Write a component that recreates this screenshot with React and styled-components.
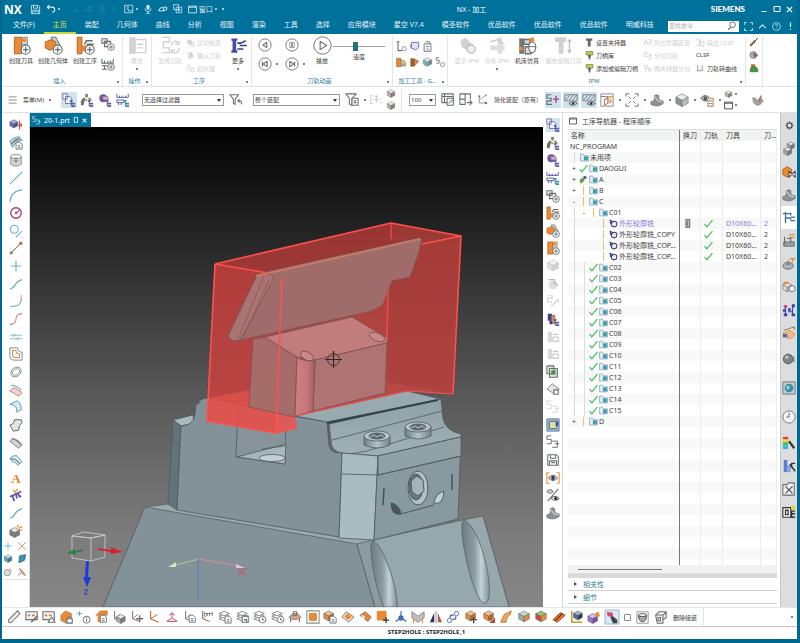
import React from 'react';
import styled, { createGlobalStyle } from 'styled-components';

const GlobalStyle = createGlobalStyle`
  * { box-sizing: border-box; }
  body { margin: 0; }
  body, button, input, select {
    font-family: 'Noto Sans', 'Noto Sans CJK SC', sans-serif;
    font-size: 7px;
    color: #3c3c3c;
  }
  button {
    padding: 0;
    border: 0;
    background: none;
  }
`;

/* ---------- icon pieces, all drawn on a 16 x 16 grid ---------- */

const INK = '#6a6e70';
const ORANGE = '#e98a35';
const RUST = '#a85a24';
const NAVY = '#5a5da8';
const TEAL = '#5cb0c5';
const GHOST = '#d2d2d2';

const L = ({ d, c = INK, w = 1.2, f = 'none' }) => (
  <path d={d} stroke={c} strokeWidth={w} fill={f} strokeLinejoin="round" />
);

const Cube = ({ x = 2, y = 1, s = 12, top = '#f3c08a', left = ORANGE, right = '#c66d1f', c = INK }) => (
  <g stroke={c} strokeWidth="0.7" strokeLinejoin="round">
    <path fill={top} d={`M${x} ${y + s * 0.27}l${s / 2} ${-s * 0.27}l${s / 2} ${s * 0.27}l${-s / 2} ${s * 0.27}z`} />
    <path fill={left} d={`M${x} ${y + s * 0.27}v${s * 0.5}l${s / 2} ${s * 0.27}v${-s * 0.5}z`} />
    <path fill={right} d={`M${x + s} ${y + s * 0.27}v${s * 0.5}l${-s / 2} ${s * 0.27}v${-s * 0.5}z`} />
  </g>
);

const GrayCube = (props) => <Cube top="#e6e8e9" left="#a4aaad" right="#777e82" {...props} />;

const Badge = ({ c = INK }) => (
  <g stroke={c} fill="#fff" strokeWidth="1">
    <circle cx="11.5" cy="11.5" r="3.8" />
    <path d="M11.5 9.2v4.6M9.2 11.5h4.6" />
  </g>
);

const Page = ({ x = 8, y = 7, c = INK, f = '#fff' }) => (
  <path d={`M${x} ${y}h4.500l2.500 2.500v5.500h-7z M${x + 2} ${y + 4}h3M${x + 2} ${y + 6}h3`} fill={f} stroke={c} />
);

const Axes = ({ a = '#c25a4a', b = '#6a9c6a' }) => (
  <g fill="none" strokeWidth="1.1">
    <path d="M3 1v9" stroke={INK} />
    <path d="M3 10l8 3" stroke={a} />
    <path d="M3 10l6-5" stroke={b} />
  </g>
);

const Layers = () => (
  <g fill="#fff" stroke={INK} strokeWidth="0.9">
    <path d="M1 10l6-2.500l6 2.500l-6 2.500z" />
    <path d="M1 7l6-2.500l6 2.500l-6 2.500z" />
    <path d="M1 4l6-2.500l6 2.500l-6 2.500z" />
  </g>
);

const Steps = ({ c = NAVY }) => (
  <g fill={c}>
    <path d="M9 8h3v2H9zM10 10h1v5h-1zM11 11h4v2h-4zM11 14h4v2h-4z" />
  </g>
);

const Sheet = ({ c = INK, f = '#a9cdd9' }) => <L c={c} f={f} w={0.9} d="M2 7L8 2l6 5-4 7z" />;

const drawings = {
  save: <><L d="M2 2h10l2 2v10H2z M5 2v4h6V2M4 14V9h8v5M6 11h4" /></>,
  undo: <L w={1.7} d="M5 2L2 5l3 3M2 5h8q4 0 4 4t-4 4" />,
  cut: <L d="M4 2l7 9M12 2L5 11M3 11h3v3H3zM10 11h3v3h-3z" />,
  copy: <L d="M2 2h8v9H2zM6 5h8v9H6z" />,
  paste: <L d="M2 3h9v11H2zM5 1h3v3H5zM7 7h7v7H7z" />,
  star: <L d="M8 2l2 4 4 .5-3 3 1 4.500-4-2-4 2 1-4.500-3-3L6 6z" />,
  screenBox: <L d="M1 2h13v12H1zM4 5h4M4 8h3v3h6" />,
  mic: <><rect x="5.500" y="1" width="5" height="8" rx="2.500" fill="currentColor" /><L c="currentColor" d="M3 7q0 5 5 5t5-5M8 12v3M5 15h6" /></>,
  pen: <L c="currentColor" w={1.6} d="M1 11l3-5h5v5H5zM9 5h5v4l-5 2" />,
  windows: <L c="currentColor" d="M1 1h8v8H1zM5 5h9v9H5zM8 8h3v3H8z" />,
  window: <L c="currentColor" d="M1 2h14v12H1zM1 4h14" w={1.5} />,
  tool: <>
    <path d="M2 1h6v14H2z" fill={ORANGE} stroke={RUST} strokeWidth="0.7" />
    <path d="M8 1h5v6H8z" fill="#d9d9d9" stroke={INK} strokeWidth="0.6" />
    <path d="M8 2h4v3H8z" fill={ORANGE} /><Badge />
  </>,
  geometry: <>
    <path d="M6 1h4l4 8-4 3z" fill="#c9cdce" stroke={INK} strokeWidth="0.8" />
    <path d="M1 5l5-2 4 2v5l-5 2-4-2z" fill={ORANGE} stroke={RUST} strokeWidth="0.7" /><Badge />
  </>,
  operation: <>
    <path d="M1 1h4v14H1z" fill={ORANGE} stroke={RUST} strokeWidth="0.7" />
    <path d="M5 8h5v5H5z" fill={ORANGE} />
    <L d="M8 4h6M7 7l2-3M9 7h6" /><Badge />
  </>,
  program: <><L d="M1 2h6v5H1zM4 5h7v6H4z" f="#eceeee" /><Badge /></>,
  method: <><L d="M1 2v5h13V2M1 10h7M4 4v3M8 4v3M11 4v3M4 10v4M1 14h6" /><Badge /></>,
  property: <>
    <path d="M1 1h5v14H1z" fill={GHOST} /><L c={GHOST} d="M6 3h9v11H6zM8 7h5M8 10h5" w={1.2} />
  </>,
  generate: <L c={GHOST} w={1.2} d="M1 1h6v4H2v5h5v4H1M9 8a3 3 0 0 1 6-1M15 4v3h-3M15 10a3 3 0 0 1-6 2M9 15v-3h3" />,
  ghostCheck: <><circle cx="6" cy="7" r="4.500" fill="#d6d6d6" /><L c="#b9b9b9" d="M8 8h6v6H8z" /></>,
  ghostVerify: <><circle cx="8" cy="9" r="5" fill="#dedede" /><L c="#bababa" d="M3 3h7v5M8 6l6 4" /></>,
  ghostPost: <L c={GHOST} w={1.5} d="M1 2h6v4H3v5h5M9 7h5v7H9z" />,
  more: <><path d="M2 2h5v2H6v8h1v2H2v-2h1V4H2z" fill="#4548a4" /><L c="#33388a" d="M7 6h3l4-2M9 8h6M7 11h5" w={1.3} /></>,
  prev: <><circle cx="8" cy="8" r="7" fill="#fff" stroke={INK} /><L d="M10 5v6L5.500 8z" /></>,
  pause: <><circle cx="8" cy="8" r="7" fill="#fff" stroke={INK} /><L d="M5.500 5h2v6h-2zM8.500 5h2v6h-2z" w={0.8} /></>,
  play: <><circle cx="8" cy="8" r="7.300" fill="#fff" stroke={INK} strokeWidth="0.8" /><L d="M6 4.500v7l5.500-3.500z" w={0.9} /></>,
  first: <><circle cx="8" cy="8" r="7" fill="#fff" stroke={INK} /><L d="M5 5v6M10.500 5v6L6 8z" /></>,
  last: <><circle cx="8" cy="8" r="7" fill="#fff" stroke={INK} /><L d="M11 5v6M5.500 5v6l4.500-3z" /></>,
  axisPoint: <><L d="M3 1v13h6M1 1h4" w={1.6} /><circle cx="12" cy="11" r="3" fill="none" stroke={INK} /></>,
  cup: <><L c={NAVY} f="#dfe3f4" d="M4 2h10v7l-4 4-7-3z" /><L d="M1 5l3 6" /></>,
  note: <><L d="M3 4h10v11H3zM5 1h6v3" f="#eef0f0" /><L d="M6 8h4M7 11l3 2" /></>,
  orangeSheet: <><path d="M1 2h6v12H1z" fill={ORANGE} stroke={RUST} /><Page x={7} y={5} f="#f7c795" /></>,
  orangeFlag: <><path d="M2 2h6v12H2z" fill={RUST} /><path d="M8 3l6 3-6 7z" fill={ORANGE} stroke={INK} /></>,
  tealTool: <><GrayCube /><path d="M4 7h6v6H4z" fill={TEAL} /></>,
  pathPoint: <><L d="M6 1H2v4h4v4H2" /><circle cx="11" cy="11" r="3" fill="none" stroke={INK} /></>,
  showIpw: <><path d="M2 4l4-3 7 7-4 5-6-4z" fill={GHOST} /><circle cx="11" cy="11" r="3.500" fill="#eee" stroke="#bbb" /></>,
  analyseIpw: <><path d="M2 8h12v4H2zM8 1h4v14H8z" fill="#dedede" /><L c="#c6c6c6" d="M2 5l6-2 5 4" /></>,
  simulate: <>
    <path d="M1 2h4v13H1z" fill="#777" /><L d="M5 3h5v4H5zM6 9h5v6H6z" f="#d9dcdd" />
    <path d="M9 2l4-1 1 3-4 1z" fill={ORANGE} /><path d="M1 9h3v3H1z" fill={ORANGE} />
    <ellipse cx="12" cy="9.500" rx="3" ry="4.500" fill="#fff" stroke={INK} /><L d="M9 9h6" w={0.8} />
  </>,
  reportTool: <><path d="M1 1h9v4H8v10H4V5H1z" fill="#d0d0d0" /><L c="#c4c4c4" d="M13 3v11M11.500 5L13 3l1.500 2M11.500 12l1.500 2 1.500-2" /></>,
  holder: <path d="M2 1h11v4h-3v10H5V5H2z" fill="#62676a" />,
  library: <><path d="M2 1h12v6H2z" fill="#c9cf3c" stroke="#555" /><path d="M5 7h6l-2 8H7z" fill="#62676a" /></>,
  ghostCompare: <L c="#cdcdcd" d="M1 13L5 2l4 11M3 9h4M10 3h5v5h-5M10 8l5 5" w={1.4} />,
  ghostSplit: <L c="#cdcdcd" d="M2 2h5v4H2v4h6M9 6h5v8H9M9 10l5-3" w={1.4} />,
  ghostHolder: <L c="#cdcdcd" d="M1 3h8v4H1M5 7v7M9 8h6l-3 6z" w={1.4} />,
  ghostOutput: <L c="#cdcdcd" d="M1 3h5v10H1M8 2v12h6V6h-4" w={1.4} />,
  curvePath: <L d="M3 2v11M1 11l2 2 2-2M7 9v4h2M11 2v10M9 10l2 2 2-2" w={1.1} />,
  brush: <><L c="#8b5b37" w={3} d="M2 14L10 6" /><L c="#444" w={1.6} d="M9 7l5-5" /></>,
  bolt: <><circle cx="7" cy="8" r="5.500" fill="#b9aaa0" stroke={INK} /><path d="M7 5l7 3-5 4z" fill="#a4583d" stroke={INK} /></>,
  greenCap: <><path d="M3 2h7v6H3z" fill="#c96f35" /><path d="M2 14q-1-8 6-8t6 8z" fill="#3d9c3f" stroke="#28692a" /></>,

  progView: <><L c={NAVY} f="#f2f4fb" w={0.9} d="M1 1h5v6H1zM4 4h5l2 2v6H4z" /><Steps /></>,
  toolView: <><path d="M6 1h3v4H6z" fill="#7d8272" /><path d="M1 9l3-4 2 1-2 8H1zM9 6l2-1 3 4-3-1z" fill="#6d7072" /><circle cx="7" cy="8" r="1.500" fill="#c9a63a" /><Steps /></>,
  geomView: <><circle cx="6" cy="6" r="4.500" fill={NAVY} /><path d="M5 4h6l1 4H6z" fill="#b9b4de" stroke="#c05a5a" strokeWidth="0.8" /><Steps /></>,
  methodView: <><L c={NAVY} w={1.1} d="M1 1v4h13V1M4 3v2M7 3v2M11 3v2M1 8h8v3H1zM3 11v3M6 11v3" /><Steps c="#3d8fa8" /></>,
  machines: <><path d="M2 2h5v8H2z" fill="#3a3f93" /><path d="M6 4h4v9H6z" fill={ORANGE} stroke={INK} /><path d="M4 10h3v4H4z" fill="#3a3f93" /><Steps /></>,
  ghostA: <GrayCube top="#f1f1f1" left="#e0e0e0" right="#d2d2d2" c="#c4c4c4" />,
  ghostB: <><path d="M2 2h5v12H2z" fill="#dadada" /><L c="#c8c8c8" d="M8 5h6M8 8h6v5H8z" /></>,
  ghostPath: <L c="#d2d2d2" w={1.4} d="M2 2h5v3H2v4h5M6 14l8-8v4" />,
  copyGreen: <><L d="M1 1h8v9H1zM4 4h9v10H4z" f="#dfe6dd" /><path d="M6 6h5v5H6z" fill="#4d9451" /></>,
  block: <><L c={INK} f="#e4e6e6" w={0.9} d="M1 8l6-6 8 6-5 6z" /><L d="M9 9h5v5H9z" f="#fff" /></>,
  pathOut: <L d="M6 1H1v4h5v5H1M7 7h6v7H7M10 10h5" w={1.1} />,
  pathOutGhost: <L c="#d6d6d6" d="M6 1H1v4h5v5H1M7 7h6v7H7M10 10h5" w={1.1} />,
  map: <><path d="M1 1h14v14H1z" fill="#8fb4cf" stroke="#5c7fa8" /><path d="M4 4h8v8H4z" fill="#d6e5a6" stroke={INK} /><path d="M11 4h3v5h-3z" fill="#4a4d9e" /></>,
  eye: <><L c={ORANGE} d="M4 2H1v12h3M12 2h3v12h-3" /><L d="M3 8q5-6 10 0q-5 6-10 0z" f="#fff" /><circle cx="8" cy="8" r="2.200" fill="#333" /></>,
  eyeSlash: <><L d="M1 4q4-4 7 0q-3 4-7 0zM14 1L2 15" f="#ddd" /><L d="M6 12q4-5 9 0q-5 4-9 0z" f="#fff" /><circle cx="11" cy="12" r="1.700" fill="#222" /></>,
  saddle: <><path d="M1 10q3 0 4-3V3q3-2 5 0v3q1 3 5 3v3q-6 5-14 1z" fill="#8c9397" stroke={INK} strokeWidth="0.8" /><path d="M5 4q2 1 4 5l5 1" fill="none" stroke="#d5d9da" strokeWidth="1.200" /></>,
  funnel: <><L d="M1 2h10L7 7v6l-2-1V7z" /><L d="M10 9h3q2 1 1 4M12 7l-2 2 2 2" /></>,
  funnelList: <><L d="M1 1h12L8 6v8l-3-1V6z" /><L f="#fff" d="M8 6h7v8H8zM10 9h3M10 11h3" /></>,
  ghostMove: <L c="#cfcfcf" d="M3 3H1v10h2M8 3l-2 2M8 3l2 2M8 3v9M4 8h8M12 12h3" w={1.3} />,
  smallCube: <GrayCube top="#efe6e0" left="#c9b3a5" right="#8c7f78" />,
  table: <><L d="M1 1h13v10H1zM1 4h13M4 1v10" /><L d="M7 6h7v8H7zM9 12l4-4" f="#fff" /></>,
  grid: <L d="M1 1h6v6H1zM7 1h6v6M1 7v6h6V7M9 11h6M12 8l3 3-3 3" />,
  nodes: <><L d="M3 3v9h9M3 8l8-6" w={0.9} /><circle cx="3" cy="3" r="1.500" fill="#8a6d6d" /><circle cx="12" cy="12" r="1.700" fill="#b05a5a" /><circle cx="12" cy="2" r="1.300" fill="#999" /></>,
  pathPlus: <><L w={1.3} d="M6 2H1v4h5v3H1v4h6" /><L c="#a3477e" w={1.7} d="M11.500 3v8M8 7h7" /></>,
  hatchEye: <><L d="M1 2h14v7H1zM2 8l5-6M6 8l5-6M10 8l5-6" w={0.9} /><L f="#fff" d="M6 12q4-4 9 0q-4 4-9 0z" /><circle cx="10.500" cy="12" r="1.500" fill="#333" /></>,
  layout: <><L d="M1 1h14v14H1zM1 4h14" w={0.9} /><path d="M9 4h6v6H9z" fill="#f6cfa8" /><L c="#b0705c" d="M5 14V8l4-3v6l-3 3M10 12l3-3" /></>,
  fit: <L d="M1 4V1h4M11 1h4v3M1 12v3h4M15 12v3h-4M4 4l3 3M12 4L9 7M4 12l3-3M12 12L9 9" w={1.1} />,
  hexCube: <GrayCube x={1} s={14} top="#ededed" left="#8d9498" right="#b9bec1" />,
  viewList: <><L d="M1 6q5-6 10 0q-5 6-10 0z" f="#eee" /><circle cx="6" cy="6" r="2.200" fill="#555" /><L c="#b98a70" f="#fff" d="M9 6h6v9H9zM10 9h4M10 12h4" /></>,
  clampTool: <><path d="M1 5l4 1 3 3 4-7 1 6 2 1-4 5-5 1-4-4z" fill="#a5a29e" stroke={INK} strokeWidth="0.8" /><path d="M9 6l3 3-3 3z" fill="#c46d52" /></>,

  boxDistance: <><Cube x={1} y={2} s={9} top="#a5a9df" left="#6367c6" right="#4649a6" /><L c="#c05050" w={1.4} d="M10 8h5M12 3v10M14 6v4" /></>,
  sheetPage: <><L c="#3e8ea6" f="#b9d4da" w={0.9} d="M1 6q4-5 11-5l3 4q-7 0-11 8z" /><L d="M3 9q4-5 9-6" /><Page /></>,
  cylinder: <><path d="M2 4v9q6 4 12 0V4z" fill="#d5d8d9" stroke={INK} strokeWidth="0.8" /><ellipse cx="8" cy="4" rx="6" ry="2.500" fill="#f2f3f3" stroke={INK} strokeWidth="0.8" /><L d="M8 5v7M5 9h6" w={0.8} /></>,
  line: <L c={TEAL} d="M1 15L15 1" />,
  arc: <L c={TEAL} d="M1 15Q2 2 15 1" />,
  circle: <><circle cx="8" cy="8" r="6" fill="none" stroke="#a83a73" strokeWidth="1.500" /><circle cx="8" cy="8" r="1.300" fill="#a83a73" /><L c="#a83a73" d="M8 8l4-3" /></>,
  circleTangent: <><circle cx="6" cy="6" r="4.500" fill="none" stroke={TEAL} strokeWidth="1.200" /><L c={TEAL} d="M8 15l7-7" /></>,
  segment: <><L d="M2 14L14 2" /><circle cx="2.500" cy="13.500" r="1.800" fill="#c06a4a" /><circle cx="13.500" cy="2.500" r="1.800" fill="#c06a4a" /></>,
  plus: <L c={TEAL} d="M8 2v12M2 8h12" w={1.3} />,
  cross: <L c="#b58a4c" d="M2 2l12 12M14 2L2 14" w={1.3} />,
  spline: <L c={TEAL} d="M1 14Q5 13 7 9T15 3" w={1.3} />,
  corner: <><L c={TEAL} d="M1 14h5Q14 13 14 6" w={1.2} /><L c="#d89a88" d="M14 7V1" /></>,
  bridge: <><L c="#d08a6b" d="M1 14Q8 14 8 8T15 2" /><L c={TEAL} d="M1 14h3M12 2h3" /></>,
  offsetArrows: <L c={TEAL} d="M1 6h14M1 10h14M5 4l2 2-2 2M11 8l-2 2 2 2" w={0.9} />,
  contour: <><L c={INK} d="M1 1h9q0 5 5 5v9H6q-5 0-5-5z" w={0.9} /><L c="#d88a4c" d="M4 4h4q0 4 4 4v4H7q-3 0-3-3z" /></>,
  ring: <><ellipse cx="8" cy="8" rx="6.500" ry="5" transform="rotate(-35 8 8)" fill="#eef5f2" stroke="#6f9488" /><ellipse cx="8" cy="8" rx="4.500" ry="3.300" transform="rotate(-35 8 8)" fill="#fff" stroke={INK} strokeWidth="0.7" /></>,
  sheetRed: <><L c="#b26a5c" f="#f1d6cd" w={0.9} d="M1 9l5-4 9 6-4 4z" /><L c={TEAL} d="M2 3q4-2 12 5" /></>,
  sheetBlue: <L c="#3e8ea6" f="#d3eaf0" w={0.9} d="M1 5l8-4q5 2 5 10l-5 3q0-6-3-8z" />,
  sheetPlain: <L c="#444" f="#dfe6e6" w={0.9} d="M1 8q5-1 5-6h8l1 3q-4 3-4 9l-6 1z" />,
  sheetPink: <><L c={INK} f="#c8d7da" w={0.9} d="M1 6l4-3 10 7-4 4z" /><L c="#bd5c88" w={1.6} d="M3 3q6 0 11 7" /></>,
  sheetPair: <><L c="#3e8ea6" f="#d6eaf0" w={0.9} d="M1 6q4-4 8-3l6 7-5 4q-2-4-6-4z" /><L d="M2 7q6-1 10 5" /></>,
  letter: <text x="8" y="14" textAnchor="middle" fontFamily="Liberation Serif, serif" fontSize="15" fontWeight="bold" fill="#e08225">A</text>,
  textWrap: <><L c="#6d4fae" w={2} d="M1 10l13-6M4 9l2 6M8 7l1 5M10 6l2 4 2-1" /><L c="#e2a72e" w={1.6} d="M5 2l2 3 3-4" /></>,
  solidSpark: <><GrayCube x={1} y={4} s={11} left="#84796c" /><L c={ORANGE} w={1.4} d="M9 4l2-3M11 5l4-2M11 7h4" /></>,
  blueCube: <Cube top="#bfe0ea" left="#5aa6bf" right="#2f7892" />,
  blueSheet: <L c="#255f75" f="#3d94b0" d="M4 3l10-2-2 9-9 4z" />,
  blobSpark: <><circle cx="7" cy="9" r="5" fill="#d6dfe1" stroke={INK} /><L c={ORANGE} d="M10 4l3-3M12 6h3" /></>,
  trimSpark: <><L c="#b5612e" f="#d8c6b5" d="M4 2l5 5 5 7-6-4z" /><L d="M2 13l6-5" /></>,

  ruler: <L d="M2 11L12 1l3 3L5 14q-2 1-3 0t0-3z" f="#eee" />,
  panelPen: <><L d="M1 2h13v9H1z" f="#f7f2ef" /><path d="M3 5h3v2H3zM8 5h3v2H8z" fill="#d8765a" /><L w={1.8} d="M7 14l7-7" /></>,
  panelTri: <><L d="M1 2h13v9H1z" f="#f7f2ef" /><path d="M3 5h3v2H3zM8 5h3v2H8z" fill="#d8765a" /><L f="#fff" d="M7 14l4-6 4 6z" /></>,
  orangeLock: <><path d="M1 6l5-5 7 3v8l-6 3-6-3z" fill={ORANGE} stroke={RUST} strokeWidth="0.6" /><L f="#fff" d="M8 10h6v5H8zM9.500 10V8h3v2" /></>,
  plusInfo: <><L c={TEAL} d="M3 1v6M0 4h6" /><circle cx="11" cy="11" r="4" fill="#fff" stroke={INK} /><L d="M11 10v3M11 8v1" /></>,
  orangePage: <><path d="M1 6l5-5h8v5z" fill={ORANGE} stroke={RUST} strokeWidth="0.6" /><path d="M3 6h4v8H3z" fill={ORANGE} /><Page x={6} y={6} /></>,
  csysCube: <><Axes /><GrayCube x={5} y={5} s={10} /></>,
  csysMove: <><Axes /><L w={1.5} d="M11 6v8M7 10h8" /></>,
  csys: <><L c="#c25a4a" d="M3 1v9l9 4" /><L c="#c98a4a" d="M3 10l8-5" /></>,
  csysRed: <L c="#c76a78" d="M8 2v7M8 9l-6 4M8 9l6 4M5 6q3-4 6 0M2 13h12" />,
  csysSave: <><Axes /><Page x={7} y={6} /></>,
  csysDim: <><Axes /><L d="M5 2v5M14 2v5M5 4h9M8 3v4M11 3v4" w={0.9} /></>,
  layersPage: <><Layers /><Page /></>,
  layersSave: <><Layers /><L d="M7 7h7v7H7zM9 11h3v3" f="#fff" /></>,
  layersMove: <><Layers /><circle cx="11" cy="11" r="3.800" fill="#fff" stroke={INK} /><L d="M11 9v2l2 1" /></>,
  layersBox: <><Layers /><GrayCube x={8} y={7} s={7} /></>,
  table3d: <><path d="M1 8l5-4h5l4 4-5 3H5z" fill="#d2a384" stroke={INK} strokeWidth="0.7" /><L d="M3 9v5M13 9v5M6 2h4v4H6z" /></>,
  target: <><L d="M1 1h14v14H1z" c="#85927c" /><path d="M4 4h8v8H4z" fill={ORANGE} stroke={RUST} strokeWidth="0.6" /></>,
  cubePage: <><Cube s={11} x={1} /><Page /></>,
  faceOrange: <><L c={INK} f="#f2d7bd" d="M1 8l5-6 9 6-6 6z" w={0.9} /><path d="M4 7l4-3 4 4-4 3z" fill={ORANGE} /></>,
  faceCut: <><L c={INK} f={ORANGE} d="M1 6l6-4 7 6-4 5z" w={0.9} /><path d="M2 5l5 3-2 3z" fill="#fff" /></>,
  orangeMove: <><path d="M1 1h11v11H1z" fill={ORANGE} /><L c="#333" w={1.4} d="M11.500 8v7M8 11.500h7" /></>,
  blueAxis: <><circle cx="8" cy="9" r="3" fill="#3b62a8" /><L c="#4a75bb" w={1.4} d="M8 9V1M8 9l-6 4M8 9l6 4" /></>,
  vee: <><path d="M1 2l7 5 7-5v7l-7 5-7-5z" fill="#c4c0b8" stroke={INK} strokeWidth="0.8" /><L c={ORANGE} d="M3 10v5M13 10v5" /></>,
  mirror: <><path d="M1 14L6 3v11z" fill="#2d2d6f" /><path d="M15 14L10 3v11z" fill="#b9574c" /><L d="M8 1v14" w={0.8} /></>,
  link: <><circle cx="4" cy="12" r="2.500" fill="none" stroke="#4d66a8" /><circle cx="12" cy="4" r="2.500" fill="none" stroke="#4d66a8" /><L c="#6a6fb0" w={1.6} d="M5 9V6h4M7 11l4-1V7" /></>,
  cubeMove: <><Cube s={11} /><L w={1.5} c="#444" d="M11 8v7M8 11h7" /></>,
  cubeArrow: <><Cube s={11} /><L w={1.8} c="#b5462e" d="M8 9l6 5M14 9v5H9" /></>,
  bent: <path d="M2 14l4-9 8-4-1 4q-4 2-5 9z" fill="#f0a55c" stroke={RUST} strokeWidth="0.8" />,
  cubeGreen: <Cube top="#c5dbe0" left="#8fb7a0" right={ORANGE} />,
  cubeTeal: <Cube top="#f2b477" left="#6fb0c1" right="#b9d7de" />,
  cubeRed: <Cube top="#9bc46b" left="#c94c3d" right={ORANGE} />,
  bars: <><path d="M1 11l9-8 5 3-9 8z" fill={ORANGE} stroke="#8a2f14" /><L c="#8a2f14" w={1.8} d="M4 12l8-8" /></>,
  measureBox: <><L c="#c49a2a" w={1.8} d="M2 1v13h12" /><Cube x={4} y={1} s={10} top="#9cb4e0" left="#4a66b0" right="#333" /></>,
  purpleBox: <><Cube x={1} y={4} s={11} top="#d9b9ef" left="#a86fd0" right="#7c49a6" /><path d="M9 4l4-2 2 5-4 1z" fill={ORANGE} /></>,
  axisPink: <><path d="M0 0h16v16H0z" fill="#dceaf5" stroke="#8ab0d0" /><path d="M2 2l7 1v5l-6-1z" fill="#d04c78" /><path d="M6 8l3-1 5 4v4H9z" fill="#444" /></>,
  bowl: <><L d="M1 1h14v14H1z" c="#999" /><path d="M3 5h10q0 8-5 8T3 5z" fill="#a5abad" stroke="#333" /><ellipse cx="8" cy="5" rx="5" ry="1.800" fill="#fff" stroke="#333" /></>,
  frame: <L w={1.3} d="M2 5h9v10H4zM11 5l4-4v7l-4 3M5 8h3v4H5zM2 5l4-4h9" f="#eee" />,

  gear: <><circle cx="8" cy="8" r="4.500" fill="none" stroke="#444" strokeWidth="2" /><L c="#444" w={2} d="M8 1v2M8 13v2M1 8h2M13 8h2M3 3l1.500 1.500M11.500 11.500L13 13M3 13l1.500-1.500M11.500 4.500L13 3" /></>,
  assembly: <><GrayCube x={6} y={0} s={8} /><GrayCube x={2} y={6} s={9} /></>,
  constraint: <><path d="M1 5l5-3 5 3v6l-5 3-5-3z" fill={ORANGE} stroke={RUST} /><L c="#444" f="#fff" d="M8 7l7 7V7l-7 7z" /></>,
  navigator: <><L c="#3f6fa0" w={1.5} d="M1 3h9M4 1v13M4 8h6M10 2v3" /><L c="#3f6fa0" d="M10 7h5M10 11h5M10 7v4" /></>,
  mill: <><path d="M2 9h12v5H2z" fill="#9aa0a2" stroke={INK} /><L c={ORANGE} w={1.7} d="M8 1h7M9 4h5" /><L w={1.3} d="M3 3v9M6 5h4v5" /></>,
  disc: <><ellipse cx="7" cy="10" rx="6" ry="4" fill="#aeb4b6" stroke={INK} /><path d="M4 9l3-6 3 6z" fill="#858b8d" /><L c={ORANGE} w={1.5} d="M9 2h6M12 2v4" /></>,
  boxesOrange: <><Cube x={1} y={3} s={10} top="#eee" left="#ddd" right="#bbb" /><path d="M2 2h6l-2 3H1z" fill={ORANGE} /><circle cx="11.500" cy="10" r="3.500" fill="#eee" stroke={INK} /></>,
  people: <><circle cx="4" cy="4" r="2" fill="#d0457a" /><circle cx="13" cy="3" r="2" fill="#4145a0" /><path d="M1 7h3v3H1zM2 12h4v3H2zM11 12h4v3h-4zM7 6h3v3H7z" fill="#4145a0" /><L c="#4145a0" d="M4 5v8M12 4v9M7 10h5" w={1.3} /></>,
  handBook: <><path d="M1 8l8-3 6 4-4 5-5 0z" fill="#f1b98a" stroke={ORANGE} strokeWidth="0.800" /><path d="M1 9h5v4H1z" fill="#4b6cb0" /><L c="#9c6a3a" d="M2 5l12-4v3" /></>,
  sphere: <><circle cx="7" cy="8" r="5.500" fill="#7d8285" stroke="#555" /><circle cx="5.500" cy="6" r="2" fill="#bcc1c3" /><L d="M13.500 5v7" /></>,
  globe: <><path d="M1 1h14v14H1z" fill="#c3cfd4" stroke={INK} /><circle cx="8" cy="8" r="5" fill="#3a8dab" /><path d="M5 5l4 1-1 4-3-1z" fill="#9fd0c0" /></>,
  clock: <><circle cx="8" cy="8" r="7" fill="#f4f4f4" stroke="#666" strokeWidth="0.900" /><L d="M8 3v5H5" /></>,
  heat: <><path d="M1 1h6v3H1z" fill="#e8442c" /><path d="M1 4h6v3H1z" fill="#f2d92e" /><path d="M1 7h6v4H1z" fill="#43c06a" /><path d="M1 11h6v4H1z" fill="#3cb4e8" /><L w={2.5} c="#333" d="M8 6l6 8" /></>,
  cutter: <><path d="M2 1h4v14H2z" fill="#5c7ed2" /><path d="M6 7h4v8H6z" fill="#88a4e0" /><L c="#333" w={1.6} d="M9 6l6 8M15 5h-4v5" /></>,
  tools: <><L f="#f0f0f0" d="M1 3h5l1-2h7v14H1z" /><L c="#555" w={1.6} d="M4 5l8 8M12 5l-8 8" /></>,
  film: <><path d="M1 3h9v11H1z" fill="#fff" stroke="#333" strokeWidth="1.300" /><L c="#333" w={1.5} d="M4 6h3v5H4zM15 7h-4v3h4M15 14h-4v-4" /><circle cx="13" cy="3" r="2.500" fill="#dcd83c" /></>,
};

const Svg = styled.svg`
  display: block;
  flex: none;
  overflow: visible;
  width: ${(p) => p.$size}px;
  height: ${(p) => p.$size}px;
`;

const Icon = ({ name, size = 14 }) => (
  <Svg viewBox="0 0 16 16" $size={size} aria-hidden="true">{drawings[name]}</Svg>
);

const Dot = styled.i`
  width: 2px;
  height: 2px;
  flex: none;
  background: #555;
  border-radius: 1px;
`;

/* ---------- window frame ---------- */

const Window = styled.div`
  display: flex;
  flex-direction: column;
  min-height: 100vh;
  padding: 0 3px 4px 2px;
  background: #00688f;
`;

const TitleBar = styled.header`
  display: grid;
  grid-template-columns: 1fr auto 1fr;
  align-items: center;
  height: 18px;
  padding: 0 4px 0 2px;
  color: #fff;
  background: #00719b;
`;

const QuickAccess = styled.div`
  display: flex;
  align-items: center;
  gap: 5px;
  path { stroke: currentColor; }
`;

const QuickButton = styled.button`
  display: flex;
  align-items: center;
  gap: 2px;
  color: #dcecf2;
  opacity: ${(p) => (p.$faint ? 0.15 : 1)};
  ${Dot} { background: currentColor; }
`;

const Brand = styled.strong`
  font: bold 12px 'Open Sans', sans-serif;
  padding-right: 3px;
`;

const Caption = styled.h1`
  margin: 0;
  padding-left: 146px;
  font-size: 7px;
  font-weight: 400;
`;

const WindowControls = styled.div`
  display: flex;
  justify-content: flex-end;
  align-items: center;
  gap: 5px;
  button { color: #fff; }
`;

const Maker = styled.strong`
  font: 900 8px Lato, sans-serif;
  padding-right: 10px;
`;

const MenuBar = styled.nav`
  display: flex;
  align-items: center;
  height: 16px;
  padding-left: 2px;
  color: #fff;
  background: #00719b;
`;

const MenuLink = styled.a`
  padding: 0 9px;
  line-height: 14px;
  white-space: nowrap;
  text-decoration: none;
  color: ${(p) => (p.$active ? '#d4e04e' : '#e6f2f6')};
  border-bottom: 2px solid ${(p) => (p.$active ? '#c8d63c' : 'transparent')};
`;

const Search = styled.label`
  display: flex;
  align-items: center;
  flex: none;
  width: 71px;
  height: 11px;
  margin: 0 5px 0 auto;
  background: #fff;
  input {
    width: 59px;
    height: 10px;
    padding: 0 1px;
    border: 0;
    font-size: 6px;
  }
  input::placeholder { color: #aaa; }
`;

const MenuTools = styled.div`
  display: flex;
  align-items: center;
  gap: 5px;
  padding-right: 2px;
  color: #dcecf2;
  button { color: inherit; }
`;

/* ---------- ribbon ---------- */

const Ribbon = styled.section`
  display: flex;
  height: 52px;
  padding-top: 2px;
  background: #fff;
`;

const Group = styled.div`
  display: flex;
  flex-direction: column;
  flex: none;
  width: ${(p) => p.$width}px;
  border-right: 1px solid #e4e7e8;
`;

const GroupBody = styled.div`
  display: flex;
  flex: 1;
  padding: 0 ${(p) => p.$pad || 0}px;
`;

const GroupLabel = styled.div`
  display: flex;
  align-items: center;
  justify-content: space-between;
  height: 9px;
  padding-right: 3px;
  font-size: 6px;
  line-height: 9px;
  white-space: nowrap;
  color: #2e7f99;
  span { flex: 1; text-align: center; }
`;

const BigButton = styled.button`
  display: flex;
  flex-direction: column;
  align-items: center;
  flex: none;
  width: ${(p) => p.$width || 32}px;
  gap: 2px;
  font-size: 6px;
  line-height: 9px;
  white-space: nowrap;
  color: ${(p) => (p.$ghost ? '#d0d0d0' : '#3c3c3c')};
`;

const Stack = styled.div`
  display: flex;
  flex-direction: column;
  flex: none;
  gap: ${(p) => p.$gap || 3}px;
  padding-top: 1px;
  width: ${(p) => (p.$width ? `${p.$width}px` : 'auto')};
`;

const ListButton = styled.button`
  display: flex;
  align-items: center;
  gap: 2px;
  height: 10px;
  font-size: 6px;
  white-space: nowrap;
  color: ${(p) => (p.$ghost ? '#cfcfcf' : '#3c3c3c')};
`;

const PlayGrid = styled.div`
  display: grid;
  grid-template-columns: 27px 26px;
  row-gap: 4px;
  padding: 2px 0 6px 6px;
  button { display: flex; align-items: center; gap: 4px; }
`;

const Speed = styled.label`
  display: flex;
  flex-direction: column;
  align-items: center;
  gap: 3px;
  padding-top: 6px;
  font-size: 6px;
  line-height: 9px;
  input {
    appearance: none;
    width: 52px;
    height: 8px;
    margin: 0;
    background: linear-gradient(#a3a3a3, #a3a3a3) center / 100% 1px no-repeat;
  }
  input::-webkit-slider-thumb {
    appearance: none;
    width: 5px;
    height: 9px;
    background: #23707f;
  }
`;

const ToolGrid = styled.div`
  display: grid;
  grid-template-columns: repeat(${(p) => p.$columns}, 12px);
  align-content: start;
  column-gap: 1px;
  padding: 5px 0 0 3px;
  row-gap: 5px;
`;

/* ---------- selection bar ---------- */

const SelectionBar = styled.section`
  display: flex;
  align-items: center;
  gap: 2px;
  height: 27px;
  padding: 0 3px 0 5px;
  background: #fff;
  border-top: 1px solid #dfe3e4;
  border-bottom: 1px solid #dfe3e4;
`;

const BarButton = styled.button`
  display: flex;
  align-items: center;
  justify-content: center;
  gap: 5px;
  flex: none;
  padding: 1px;
  font-size: ${(p) => (p.$text ? 6 : 7)}px;
  white-space: nowrap;
  background: ${(p) => (p.$active ? '#cfe3ef' : 'none')};
`;

const Picker = styled.span`
  position: relative;
  flex: none;
  width: ${(p) => p.$width}px;
  margin: 0 2px;
  select {
    display: block;
    appearance: none;
    width: 100%;
    height: 12px;
    padding: 0 1px;
    border: 1px solid #999;
    border-radius: 0;
    background: #fff;
    font-size: 6px;
  }
  &::after {
    content: '';
    position: absolute;
    right: 3px;
    top: 5px;
    border: 2px solid transparent;
    border-top: 3px solid #333;
    border-bottom: 0;
  }
`;

const Divider = styled.i`
  width: 1px;
  height: 22px;
  flex: none;
  background: #dfe3e4;
`;

const Gap = styled.i`
  flex: ${(p) => (p.$width ? `0 0 ${p.$width}px` : 1)};
`;

const ToolStack = styled.div`
  display: flex;
  flex-direction: column;
  gap: ${(p) => p.$gap || 2}px;
  color: #777;
`;

/* ---------- work area ---------- */

const WorkArea = styled.main`
  display: flex;
  flex: 1;
  background: #fff;
`;

const SideTools = styled.aside`
  display: flex;
  flex-direction: column;
  align-items: center;
  flex: none;
  width: ${(p) => p.$width}px;
  padding-top: 5px;
  background: #fff;
  border-right: 1px solid #d5dadc;
`;

const ToolColumn = styled.div`
  display: flex;
  flex-direction: column;
  justify-content: space-between;
  align-items: center;
  height: ${(p) => p.$height}px;
`;

const PairGrid = styled.div`
  display: grid;
  grid-template-columns: 11px 11px;
  gap: 3px;
  padding: 3px 0 2px;
  border-bottom: 1px solid #e2e2e2;
`;

const IconButton = styled.button`
  display: flex;
  overflow: visible;
  background: ${(p) => (p.$active ? '#cfe3ef' : 'none')};
`;

const Stage = styled.div`
  display: flex;
  flex-direction: column;
  flex: 1;
  min-width: 0;
`;

const TabStrip = styled.div`
  display: flex;
  height: 14px;
  background: #fff;
`;

const FileTab = styled.button`
  display: flex;
  align-items: center;
  gap: 3px;
  padding: 0 4px 0 2px;
  color: #fff;
  background: #00719b;
  path { stroke: #dcecf2; }
`;

const Viewport = styled.div`
  position: relative;
  flex: 1;
  min-height: 300px;
  background: linear-gradient(#000 0%, #141414 12%, #3a3a3a 36%, #585858 56%, #7c7c7c 85%, #868686 100%);
  svg {
    position: absolute;
    inset: 0;
    width: 100%;
    height: 100%;
  }
`;

/* ---------- operation navigator ---------- */

const Navigator = styled.section`
  display: flex;
  flex-direction: column;
  flex: none;
  width: 217px;
  padding: 0 3px 0 5px;
  background: #fff;
`;

const NavTitle = styled.h2`
  display: flex;
  align-items: center;
  gap: 5px;
  height: 16px;
  margin: 0;
  padding-left: 1px;
  font-size: 7px;
  font-weight: 400;
`;

const TreeFrame = styled.div`
  height: 436px;
  overflow: hidden;
  border-top: 1px solid #e0e0e0;
`;

const Tree = styled.table`
  width: 100%;
  table-layout: fixed;
  border-collapse: collapse;
  th, td {
    height: 11px;
    padding: 0 0 0 3px;
    overflow: hidden;
    font-weight: 400;
    text-align: left;
    line-height: 10px;
    white-space: nowrap;
    border-right: 1px solid #ececec;
  }
  th { background: #f1f2f2; }
  th:first-child, td:first-child { border-right: 1px solid #777; padding-left: 1px; }
  tbody tr:nth-child(even) { background: #f8f8f8; }
`;

const Row = styled.tr`
  color: ${(p) => (p.$current ? '#8478d8' : '#3c3c3c')};
`;

const NameCell = styled.div`
  display: flex;
  align-items: center;
  height: 11px;
`;

const Slot = styled.span`
  display: flex;
  align-items: center;
  justify-content: center;
  flex: none;
  width: ${(p) => p.$width}px;
  height: 11px;
  line-height: 10px;
  background: ${(p) => (p.$guide ? 'linear-gradient(#dcdcdc, #dcdcdc) center / 1px 100% no-repeat' : 'none')};
`;

const ScrollTrack = styled.div`
  height: 9px;
  padding: 4px 115px 0 10px;
  background: #f1f1f1;
  border-bottom: 1px solid #ddd;
`;

const ScrollThumb = styled.div`
  height: 1px;
  background: #777;
`;

const Splitter = styled.div`
  height: 4px;
  background: #dadada;
`;

const Section = styled.button`
  display: flex;
  align-items: center;
  gap: 6px;
  height: 13px;
  padding-left: 6px;
  color: #2e7f99;
  border-bottom: 1px solid #d0d0d0;
  &::before {
    content: '';
    border: 2px solid transparent;
    border-left: 3px solid #2b5968;
    border-right: 0;
  }
`;

const ResourceBar = styled.aside`
  display: flex;
  flex-direction: column;
  flex: none;
  width: 17px;
  padding-top: 1px;
  background: #dcddde;
  border-left: 1px solid #c4c8ca;
`;

const ResourceTab = styled.button`
  display: flex;
  align-items: center;
  justify-content: center;
  height: ${(p) => (p.$tall ? 29 : 23)}px;
  background: ${(p) => (p.$active ? '#fff' : 'none')};
`;

/* ---------- bottom ---------- */

const BottomBar = styled.footer`
  display: flex;
  align-items: center;
  gap: 5px;
  height: 20px;
  padding: 0 4px 0 5px;
  background: #fff;
  border-bottom: 1px solid #d5c5c5;
  border-top: 1px solid #e6e6e6;
  input {
    appearance: none;
    width: 7px;
    height: 7px;
    margin: 0;
    border: 1px solid #888;
    border-radius: 1px;
  }
  label { display: flex; }
`;

const BottomIcons = styled.div`
  display: flex;
  justify-content: space-between;
  flex: 0 1 612px;
`;

const Status = styled.div`
  height: 12px;
  padding-left: 54px;
  font-size: 6px;
  font-weight: 700;
  line-height: 11px;
  text-align: center;
  color: #222;
  background: #fff;
`;

/* ---------- data ---------- */

const menus = ['文件(F)', '主页', '装配', '几何体', '曲线', '分析', '视图', '渲染', '工具', '选择', '应用模块', '星空 V7.4', '模圣软件', '优品软件', '优品软件', '优品软件', '明威科技'];

const leftTools = ['boxDistance', 'sheetPage', 'cylinder', 'line', 'arc', 'circle', 'circleTangent', 'segment', 'plus', 'spline', 'corner', 'bridge', 'offsetArrows', 'contour', 'ring', 'sheetRed', 'sheetBlue', 'sheetPlain', 'sheetPink', 'sheetPair', 'letter', 'textWrap', 'spline', 'solidSpark'];
const pairTools = ['plus', 'cross', 'blueCube', 'blueSheet', 'blobSpark', 'trimSpark'];

const viewTools = ['progView', 'toolView', 'geomView', 'methodView', 'program', 'operation', 'geometry', 'tool', 'ghostA', 'ghostVerify', 'ghostPath', 'machines', 'ghostB', 'ghostB', 'copyGreen', 'block', 'pathOutGhost', 'map', 'pathOut', 'save', 'eye', 'eyeSlash', 'saddle'];

const resourceTabs = ['gear', 'assembly', 'constraint', 'saddle', 'navigator', 'mill', 'disc', 'boxesOrange', 'people', 'handBook', 'sphere', 'globe', 'clock', 'heat', 'cutter', 'tools', 'film'];
const tallTabs = ['sphere', 'globe', 'clock'];

const bottomTools = ['ruler', 'panelPen', 'panelTri', 'orangeLock', 'plusInfo', 'orangePage', 'csysCube', 'csysMove', 'csys', 'csysRed', 'csysSave', 'csysDim', 'layersPage', 'layersSave', 'layersMove', 'layersMove', 'table3d', 'target', 'cubePage', 'faceOrange', 'faceCut', 'orangeMove', 'blueAxis', 'vee', 'mirror', 'link', 'cubeMove', 'cubeArrow', 'bent', 'cubeGreen', 'cubeRed', 'bars', 'measureBox', 'purpleBox', 'axisPink'];

const operation = (name, current) => ({ name, depth: 3, status: 'bar', icon: 'op', tool: 'D10X60...', current });

const rows = [
  { name: 'NC_PROGRAM', depth: 0 },
  { name: '未用项', depth: 1, icon: 'folder' },
  { name: 'DAOGUI', depth: 1, toggle: '+', status: 'check', icon: 'folder' },
  { name: 'A', depth: 1, toggle: '+', status: 'mixed', icon: 'folder' },
  { name: 'B', depth: 1, toggle: '+', status: 'bar', icon: 'folder' },
  { name: 'C', depth: 1, toggle: '-', status: 'bar', icon: 'folder' },
  { name: 'C01', depth: 2, toggle: '-', status: 'bar', icon: 'folder' },
  operation('外形轮廓铣', true),
  operation('外形轮廓铣_COPY'),
  operation('外形轮廓铣_COP...'),
  operation('外形轮廓铣_COP...'),
  ...Array.from({ length: 14 }, (_, i) => ({
    name: `C${String(i + 2).padStart(2, '0')}`,
    depth: 2,
    status: 'check',
    icon: 'folder',
  })),
  { name: 'D', depth: 1, toggle: '+', status: 'bar', icon: 'folder' },
];

const treeMarks = {
  check: <L c="#48c45c" w={2.4} d="M1 9l4 5L15 2" />,
  bar: <L c="#e9c46a" w={2} d="M8 0v16" />,
  mixed: <><path d="M1 9l6-5 3 6-6 5z" fill="#4cae50" /><path d="M8 2h5v5H8z" fill="#5a4a9c" /><L c="#c46a3a" w={2} d="M2 14l5-6" /></>,
  folder: <><path d="M1 2h5l2 3h7v9H1z" fill="#dfeef2" stroke="#6d8a94" /><path d="M7 6h7v7H7z" fill="#3f9db0" /></>,
  op: <><circle cx="9" cy="9" r="5" fill="#e7e9f5" stroke="#3d4376" strokeWidth="1.800" /><L c="#3d4376" w={2} d="M2 2l5 3-4 3z" /></>,
  holder: <><path d="M5 1h7v14H5z" fill="#bbb" stroke="#555" strokeWidth="1.500" /><L c="#555" d="M8 4v8" /></>,
};

const Mark = ({ name, size = 9 }) => (
  <Svg viewBox="0 0 16 16" $size={size} aria-hidden="true">{treeMarks[name]}</Svg>
);

/* ---------- parts ---------- */

const Big = ({ icon, label, ghost, width, menu }) => (
  <BigButton $ghost={ghost} $width={width}>
    <Icon name={icon} size={19} />
    {label}
    {menu && <Dot />}
  </BigButton>
);

const Item = ({ icon, label, ghost }) => (
  <ListButton $ghost={ghost}>
    {icon && <Icon name={icon} size={9} />}
    {label}
  </ListButton>
);

const Tools = ({ names, size, active = [] }) => names.map((name, i) => (
  <IconButton key={i} aria-label={name} $active={active.includes(i)}>
    <Icon name={name} size={size} />
  </IconButton>
));

const TreeRow = ({ row }) => (
  <Row $current={row.current}>
    <td>
      <NameCell>
        {row.depth === 0 && <Slot $width={1} />}
        {row.depth > 1 && <Slot $width={10} $guide />}
        {row.depth > 2 && <Slot $width={10} />}
        {row.depth > 0 && <Slot $width={10} $guide={!row.toggle && row.depth < 3}>{row.toggle}</Slot>}
        {row.status && <Slot $width={9}><Mark name={row.status} /></Slot>}
        {row.icon && <Slot $width={11}><Mark name={row.icon} /></Slot>}
        {row.name}
      </NameCell>
    </td>
    <td>{row.current && <Mark name="holder" />}</td>
    <td>{row.tool && <Mark name="check" />}</td>
    <td>{row.tool}</td>
    <td>{row.tool && '2'}</td>
  </Row>
);

const Bolt = ({ x, y }) => (
  <g stroke="#4e5a60" strokeWidth="0.8">
    <path d={`M${x - 13} ${y - 4}v9q13 6 26 0v-9z`} fill="url(#pin)" />
    <ellipse cx={x} cy={y - 4} rx="13" ry="5" fill="#b7c5c9" />
    <ellipse cx={x} cy={y - 4} rx="8" ry="3" fill="#5d686d" />
    <path d={`M${x - 7} ${y - 3}l4-2 3 2 4-2 3 2`} fill="none" stroke="#d5dfe2" />
  </g>
);

const Model = () => (
  <svg viewBox="30 127 513 480" preserveAspectRatio="xMidYMid slice" aria-hidden="true">
    <defs>
      <linearGradient id="pin"><stop offset="0" stopColor="#707e84" /><stop offset="0.500" stopColor="#b4c3c7" /><stop offset="1" stopColor="#74838a" /></linearGradient>
      <linearGradient id="slot"><stop offset="0" stopColor="#6d7c82" /><stop offset="0.450" stopColor="#8a9ba1" /><stop offset="0.700" stopColor="#c3d2d6" /><stop offset="1" stopColor="#7f9096" /></linearGradient>
      <linearGradient id="post"><stop offset="0" stopColor="#cf7f82" /><stop offset="0.600" stopColor="#c4777a" /><stop offset="1" stopColor="#9c5f60" /></linearGradient>
      <linearGradient id="rail" x2="0" y2="1"><stop offset="0" stopColor="#8fa1a7" /><stop offset="1" stopColor="#a0b1b6" /></linearGradient>
    </defs>

    {/* base */}
    <g stroke="#566268" strokeWidth="0.8" strokeLinejoin="round">
      <path d="M145 507l23-3 210 30 80-10 25-8 26 91H103z" fill="#9aabb0" />
      <path d="M145 507l212 37 18 63H103z" fill="#829298" />
      <path d="M357 544l16-4 18 67h-16z" fill="#8b9ba1" />
      <path d="M373 540l85-19 25-5 26 91H391z" fill="#97a8ad" />
      <path d="M371 545c1-8 8-2 15 15s12 37 11 47h-13c-8-17-14-50-13-62z" fill="url(#slot)" />
      <path d="M462 524c1-9 11 1 18 20s12 46 8 56-12-5-17-22-10-42-9-54z" fill="url(#slot)" />
    </g>

    {/* jaw */}
    <g stroke="#4e5a60" strokeWidth="0.8" strokeLinejoin="round">
      <path d="M173 420l20-5 1 8-13 3z" fill="#a9bbc0" />
      <path d="M173 420l8 6-4 84-9-6 4-64z" fill="#64737a" />
      <path d="M172 440l8 5" fill="none" />
      <path d="M181 426q12 0 14-12l1-10h3v-3l6-3 82 17 40 7 2 23q1 9 13 8l-3 84-162-27z" fill="#829298" />
      <path d="M295 416l112-25 34 8-114 23z" fill="#97aaaf" />
      <path d="M329 424l112-25 2 20q3 12 18 15v3l-83 19-36-3q-11-2-11-12z" fill="url(#rail)" />
      <path d="M332 440l110-29M341 454q12 0 26-3l77-24" fill="none" />
      <path d="M327 423l111-23" stroke="#354248" strokeWidth="1.800" />
      <path d="M342 453l36 3-4 84-35-2z" fill="#a8bcc2" />
      <path d="M378 456l83-19-3 82-84 21z" fill="#8999a0" />
      <path d="M378 456l83-19v19l-83 19z" fill="#91a2a7" />
      <path d="M342 474l36 1 83-19" fill="none" />
      <path d="M238 408l-2 49 49 7 1-45" fill="#869499" />
      <path d="M237 457l49-13-1 20z" fill="#a6b7bc" />
      <ellipse cx="272" cy="458" rx="13" ry="3.500" fill="#c3d1d5" />
      <path d="M262 449l23-3" fill="none" />
    </g>
    <Bolt x={377} y={440} />
    <Bolt x={418} y={431} />
    <g stroke="#465258" strokeWidth="0.9">
      <ellipse cx="418" cy="488" rx="10" ry="17" fill="#b2c1c6" />
      <ellipse cx="416" cy="487" rx="7" ry="13" fill="#6a787e" />
      <path d="M411 481l6-5 6 4 1 11-6 5-6-4z" fill="#a4b3b8" />
      <path d="M384 488l-1 17M452 474v16" fill="none" strokeWidth="1.500" />
      <path d="M391 503q8 1 10 11-10 2-10-11z" fill="#4b575c" />
      <path d="M444 491q-9 3-10 12 9 3 10-12z" fill="#c1d0d4" />
      <path d="M401 514l33-9" fill="none" />
    </g>

    {/* stock box */}
    <path d="M215 264l176-41 70 13-8 158-46-3-112 25 2 12-21 5-69-12z" fill="#e04440" fillOpacity="0.700" />
    <path d="M215 264l63 10-2 159-69-12z" fill="#b93d36" fillOpacity="0.350" />
    <path d="M215 264l176-41 70 13-179 41z" fill="#802d2b" fillOpacity="0.350" />
    <path d="M391 223l70 13-8 158-66-12z" fill="#a03c38" fillOpacity="0.450" />
    <path d="M207 421l1-23 42-8-1 17 46 8 2 13-21 5z" fill="#ff5a54" fillOpacity="0.450" />

    {/* clamped part */}
    <g stroke="#7d5252" strokeWidth="0.800" strokeLinejoin="round">
      <path d="M253 339l12-2 32 20-2 60-46-10z" fill="#a66c69" />
      <path d="M265 337l87-20 35 21v5l-72 17-18-3z" fill="#c17c7c" />
      <path d="M315 360l72-17-2 50-72 18z" fill="#b07373" />
      <path d="M297 357q8 6 18 3l-2 51-18 5z" fill="url(#post)" />
      <ellipse cx="307" cy="356" rx="7" ry="4" transform="rotate(28 307 356)" fill="#c9898a" />
      <ellipse cx="377" cy="337" rx="8" ry="4" transform="rotate(22 377 337)" fill="#c9898a" />
      <path d="M257 275q3-2 8-3l154-34q4 0 2 5l-3 12-8 22-18 4-5 13-4 10q-5 5-15 8l-131 29q-5 1-8-3-2-2 1-7z" fill="#a06c6b" />
      <path d="M257 275l13-1q5 1 2 8l-32 58-7 1-5-5z" fill="#aa7473" />
      <path d="M264 276l-26 63M269 280l-26 58" fill="none" stroke="#865958" />
    </g>
    <path d="M256 276l164-37" stroke="#c47b68" strokeWidth="2" />

    {/* stock box edges */}
    <g fill="none" stroke="#ff504d" strokeWidth="1.600" strokeLinejoin="round">
      <path d="M215 264l176-41 70 13-8 158M215 264l-8 157 69 12 20-5M215 264l53 9" />
      <path d="M282 277l-6 156M422 244l39-8" />
      <path d="M391 223v16M388 290l-1 50" strokeOpacity="0.700" />
      <path d="M295 416l112-25 46 3" strokeWidth="1" />
    </g>

    {/* cursor */}
    <g fill="none" stroke="#302828">
      <circle cx="333.500" cy="359.500" r="6" strokeWidth="0.800" />
      <path d="M325 359.500h17M333.500 351v17" strokeWidth="1.200" />
    </g>

    {/* view triad */}
    <g fill="none" stroke="#c6c6c6" strokeWidth="0.900">
      <path d="M72 536l12-4 21 3-14 3zM72 536l19 2v23l-19-3zM91 538l14-3v22l-14 4" />
    </g>
    <path d="M98 548l13 2v-3l12 5-12 2v-2l-13-2z" fill="#d4252c" />
    <path d="M83 549l-8 2v-2l-8 4 8 2v-2l8-2z" fill="#268539" />
    <path d="M86 561h3l-1 16h3l-4 10-4-10h2z" fill="#1b3bdc" />
    <path d="M84 590h4l-4 4h4" stroke="#2c42c8" fill="none" />

    {/* work coordinate system */}
    <path d="M199 559l-24 6" stroke="#a7cf8e" />
    <path d="M168 567l8-5v5z" fill="#cfe8bd" />
    <path d="M199 559l40 7" stroke="#e2899a" />
    <path d="M245 568l-9-4v4z" fill="#f0c1c8" />
    <path d="M198 559v41" stroke="#6175c4" />
    <text x="238" y="575" fontSize="8" fontFamily="Noto Sans, sans-serif" fill="#c84a62">XC</text>
    <text x="171" y="574" fontSize="7" fontFamily="Noto Sans, sans-serif" fill="#7fa279">Y</text>
  </svg>
);

const Header = () => (
  <>
    <TitleBar>
      <QuickAccess>
        <Brand>NX</Brand>
        <QuickButton aria-label="save"><Icon name="save" size={11} /></QuickButton>
        <QuickButton aria-label="undo"><Icon name="undo" size={10} /><Dot /></QuickButton>
        <Gap $width={2} />
        {['cut', 'copy', 'paste', 'star'].map((name) => (
          <QuickButton key={name} aria-label={name} $faint><Icon name={name} size={8} /></QuickButton>
        ))}
        <QuickButton aria-label="screen"><Icon name="screenBox" size={10} /><Dot /></QuickButton>
        <QuickButton aria-label="voice"><Icon name="mic" size={10} /></QuickButton>
        <QuickButton aria-label="touch"><Icon name="pen" size={10} /></QuickButton>
        <QuickButton aria-label="windows"><Icon name="windows" size={10} /></QuickButton>
        <QuickButton><Icon name="window" size={9} />窗口<Dot /></QuickButton>
        <QuickButton aria-label="customize"><Dot /></QuickButton>
      </QuickAccess>
      <Caption>NX - 加工</Caption>
      <WindowControls>
        <Maker>SIEMENS</Maker>
        <button aria-label="minimize"><Svg viewBox="0 0 16 16" $size={8}><L c="#fff" w={2} d="M3 13h10" /></Svg></button>
        <button aria-label="maximize"><Svg viewBox="0 0 16 16" $size={8}><L c="#fff" w={2} d="M2 3h12v10H2z" /></Svg></button>
        <button aria-label="close"><Svg viewBox="0 0 16 16" $size={7}><L c="#fff" w={3} d="M2 2l12 12M14 2L2 14" /></Svg></button>
      </WindowControls>
    </TitleBar>
    <MenuBar>
      {menus.map((menu, i) => <MenuLink key={i} href="#" $active={i === 1}>{menu}</MenuLink>)}
      <Search>
        <input type="search" placeholder="查找命令" aria-label="查找命令" />
        <Svg viewBox="0 0 16 16" $size={10}><circle cx="9" cy="6" r="4.500" fill="none" stroke="#555" strokeWidth="1.300" /><L d="M6 10l-4 4" w={2} /></Svg>
      </Search>
      <MenuTools>
        <button aria-label="full screen"><Svg viewBox="0 0 16 16" $size={9}><L c="#dcecf2" w={1.6} d="M1 5V1h4M11 1h4v4M1 11v4h4M15 11v4h-4" /></Svg></button>
        <button aria-label="collapse"><Svg viewBox="0 0 16 16" $size={9}><L c="#dcecf2" w={1.8} d="M2 11l6-6 6 6" /></Svg></button>
        <button aria-label="help"><Svg viewBox="0 0 16 16" $size={9}><circle cx="8" cy="8" r="7" fill="none" stroke="#dcecf2" strokeWidth="1.300" /><L c="#dcecf2" w={1.4} d="M6 6q0-2 2-2t2 2-2 3M8 11v1" /></Svg></button>
        <button aria-label="options"><Svg viewBox="0 0 16 16" $size={9}><L c="#dcecf2" w={2.2} d="M8 1v8M8 12v2" /></Svg></button>
      </MenuTools>
    </MenuBar>
  </>
);

const RibbonBar = () => (
  <Ribbon>
    <Group $width={121}>
      <GroupBody $pad={3}>
        <Big icon="tool" label="创建刀具" />
        <Big icon="geometry" label="创建几何体" />
        <Big icon="operation" label="创建工序" />
        <Stack $gap={6}>
          <Tools names={['program', 'method']} size={14} />
        </Stack>
      </GroupBody>
      <GroupLabel><span>插入</span><Dot /></GroupLabel>
    </Group>
    <Group $width={29}>
      <GroupBody><Big icon="property" label="属性" width={28} ghost menu /></GroupBody>
      <GroupLabel><span>操作</span><Dot /></GroupLabel>
    </Group>
    <Group $width={100}>
      <GroupBody $pad={2}>
        <Big icon="generate" label="生成刀轨" ghost />
        <Stack $width={39}>
          <Item icon="ghostCheck" label="过切检查" ghost />
          <Item icon="ghostVerify" label="确认刀轨" ghost />
          <Item icon="ghostPost" label="后处理" ghost />
        </Stack>
        <Big icon="more" label="更多" width={26} menu />
      </GroupBody>
      <GroupLabel><span>工序</span><Dot /></GroupLabel>
    </Group>
    <Group $width={141}>
      <GroupBody>
        <PlayGrid>
          <button aria-label="play backward"><Icon name="prev" /></button>
          <button aria-label="pause"><Icon name="pause" /></button>
          <button aria-label="first"><Icon name="first" /><Dot /></button>
          <button aria-label="last"><Icon name="last" /><Dot /></button>
        </PlayGrid>
        <Big icon="play" label="播放" width={22} />
        <Speed>
          <input type="range" defaultValue="43" aria-label="速度" />
          速度
        </Speed>
      </GroupBody>
      <GroupLabel><span>刀轨动画</span><Dot /></GroupLabel>
    </Group>
    <Group $width={55}>
      <GroupBody>
        <ToolGrid $columns={4}>
          <Tools names={['axisPoint', 'cup', 'note']} size={11} />
          <i />
          <Tools names={['orangeSheet', 'orangeFlag', 'tealTool', 'pathPoint']} size={11} />
        </ToolGrid>
      </GroupBody>
      <GroupLabel><span>加工工具 - G...</span><Dot /></GroupLabel>
    </Group>
    <Group $width={298}>
      <GroupBody $pad={4}>
        <Big icon="showIpw" label="显示 IPW" width={30} ghost />
        <Big icon="analyseIpw" label="分析 IPW" width={30} ghost menu />
        <Big icon="simulate" label="机床仿真" width={30} />
        <Big icon="reportTool" label="报告编辑刀具" width={43} ghost />
        <Stack $width={58}>
          <Item icon="holder" label="设置夹持器" />
          <Item icon="library" label="刀柄库" />
          <Item icon="library" label="添加或编辑刀柄" />
        </Stack>
        <Stack $width={53}>
          <Item icon="ghostCompare" label="列出管理装置" ghost />
          <Item icon="ghostSplit" label="分割刀轨" ghost />
          <Item icon="ghostHolder" label="两夹持器分割" ghost />
        </Stack>
        <Stack>
          <Item icon="ghostOutput" label="输出 CLSF" ghost />
          <Item label="CLSF" />
          <Item icon="curvePath" label="刀轨转曲线" />
        </Stack>
      </GroupBody>
      <GroupLabel><span>IPW</span><Dot /></GroupLabel>
    </Group>
    <Group $width={17}>
      <GroupBody $pad={3}>
        <Stack>
          <Tools names={['brush', 'bolt', 'greenCap']} size={10} />
        </Stack>
      </GroupBody>
    </Group>
  </Ribbon>
);

const Selection = () => (
  <SelectionBar>
    <BarButton $text>
      <Svg viewBox="0 0 16 16" $size={10}><L d="M1 3h13M1 8h13M1 13h13" /></Svg>
      菜单(M) <Dot />
    </BarButton>
    <Gap $width={5} />
    <BarButton $active aria-label="program order view"><Icon name="progView" /></BarButton>
    <BarButton aria-label="machine tool view"><Icon name="toolView" /></BarButton>
    <BarButton aria-label="geometry view"><Icon name="geomView" /></BarButton>
    <BarButton aria-label="method view"><Icon name="methodView" /></BarButton>
    <Gap $width={5} />
    <Picker $width={82}><select aria-label="过滤器"><option>无选择过滤器</option></select></Picker>
    <BarButton aria-label="reset filter"><Icon name="funnel" /></BarButton>
    <Gap $width={3} />
    <Picker $width={87}><select aria-label="范围"><option>整个装配</option></select></Picker>
    <BarButton aria-label="filters"><Icon name="funnelList" /><Dot /></BarButton>
    <BarButton aria-label="move"><Icon name="ghostMove" size={13} /></BarButton>
    <ToolStack><Tools names={['smallCube', 'smallCube']} size={10} /></ToolStack>
    <Gap $width={1} />
    <Divider />
    <Gap $width={1} />
    <Picker $width={27}><select aria-label="100"><option>100</option></select></Picker>
    <BarButton aria-label="table"><Icon name="table" /></BarButton>
    <BarButton aria-label="grid"><Icon name="grid" /></BarButton>
    <BarButton $text><Icon name="nodes" size={12} />简化装配（原有）</BarButton>
    <BarButton $active aria-label="path"><Icon name="pathPlus" /></BarButton>
    <BarButton $active aria-label="section"><Icon name="hatchEye" /></BarButton>
    <BarButton $active aria-label="clip"><Icon name="hatchEye" /></BarButton>
    {['layout', 'fit', 'saddle', 'hexCube', 'viewList'].map((name) => (
      <BarButton key={name} aria-label={name}><Icon name={name} /><Dot /></BarButton>
    ))}
    <ToolStack><Tools names={['smallCube', 'window']} size={9} /></ToolStack>
    <ToolStack $gap={9}><Dot /><Dot /></ToolStack>
    <Gap $width={10} />
    <BarButton aria-label="clamp"><Icon name="clampTool" size={12} /></BarButton>
  </SelectionBar>
);

const OperationNavigator = () => (
  <Navigator>
    <NavTitle>
      <Svg viewBox="0 0 16 16" $size={8}><L c="#444" w={1.6} d="M1 2h14v12H1zM1 4h14" /></Svg>
      工序导航器 - 程序顺序
    </NavTitle>
    <TreeFrame>
      <Tree>
        <colgroup>
          <col />
          <col width="21" />
          <col width="22" />
          <col width="38" />
          <col width="16" />
        </colgroup>
        <thead>
          <tr><th>&nbsp;名称</th><th>换刀</th><th>刀轨</th><th>刀具</th><th>刀...</th></tr>
        </thead>
        <tbody>
          {rows.map((row, i) => <TreeRow key={i} row={row} />)}
          {Array.from({ length: 13 }, (_, i) => (
            <tr key={i}><td /><td /><td /><td /><td /></tr>
          ))}
        </tbody>
      </Tree>
    </TreeFrame>
    <ScrollTrack><ScrollThumb /></ScrollTrack>
    <Splitter />
    <Section>相关性</Section>
    <Section>细节</Section>
  </Navigator>
);

const App = () => (
  <Window>
    <GlobalStyle />
    <Header />
    <RibbonBar />
    <Selection />
    <WorkArea>
      <SideTools $width={28}>
        <ToolColumn $height={420}><Tools names={leftTools} size={14} /></ToolColumn>
        <PairGrid><Tools names={pairTools} size={10} /></PairGrid>
      </SideTools>
      <Stage>
        <TabStrip>
          <FileTab>
            <Icon name="pathOut" size={9} />
            20-1.prt
            <Svg viewBox="0 0 16 16" $size={6}><L w={2.4} d="M3 1h9v13H3z" /></Svg>
            <Svg viewBox="0 0 16 16" $size={5}><L w={3.6} d="M2 2l12 12M14 2L2 14" /></Svg>
          </FileTab>
        </TabStrip>
        <Viewport><Model /></Viewport>
      </Stage>
      <SideTools $width={20}>
        <ToolColumn $height={402}><Tools names={viewTools} size={14} active={[0]} /></ToolColumn>
      </SideTools>
      <OperationNavigator />
      <ResourceBar>
        {resourceTabs.map((name, i) => (
          <ResourceTab key={i} aria-label={name} $tall={tallTabs.includes(name)} $active={name === 'navigator'}>
            <Icon name={name} size={name === 'gear' ? 9 : 14} />
          </ResourceTab>
        ))}
      </ResourceBar>
    </WorkArea>
    <BottomBar>
      <BottomIcons><Tools names={bottomTools} size={14} /></BottomIcons>
      <label><input type="checkbox" aria-label="option" /></label>
      <Tools names={['bowl', 'frame']} size={13} />
      <BarButton $text>删除组装</BarButton>
      <Divider />
      <Gap />
      <Dot />
    </BottomBar>
    <Status>STEP2HOLE : STEP2HOLE_1</Status>
  </Window>
);

export default App;
